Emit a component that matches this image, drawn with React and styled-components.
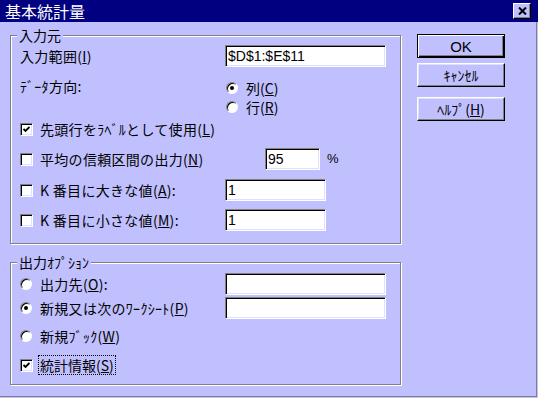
import styled, { createGlobalStyle, css } from "styled-components";

const GlobalStyle = createGlobalStyle`
  html, body {
    margin: 0;
    padding: 0;
    background: #c0c0ff;
  }
  body {
    font-family: "Noto Sans CJK JP", "Liberation Sans", sans-serif;
    font-size: 14px;
    color: #000;
  }
`;

const Window = styled.div`
  width: 538px;
  height: 398px;
  background: #c0c0ff;
  display: flex;
  flex-direction: column;
  overflow: hidden;
`;

const TitleBar = styled.div`
  height: 22px;
  flex-shrink: 0;
  background: #000080;
  color: #fff;
  display: flex;
  justify-content: space-between;
  align-items: center;
  padding: 0 7px 0 5px;
  font-size: 16px;
  line-height: 22px;
`;

const CloseButton = styled.div`
  width: 18px;
  height: 16px;
  box-sizing: border-box;
  background: #c0c0ff;
  border: 1px solid;
  border-color: #fff #000 #000 #fff;
  box-shadow: inset -1px -1px 0 #808080;
  display: flex;
  align-items: center;
  justify-content: center;
`;

const Body = styled.div`
  flex: 1;
  display: flex;
  padding-left: 10px;
  margin: 0 1px 1px 0;
  border-right: 1px solid #808080;
  border-bottom: 1px solid #808080;
`;

const LeftColumn = styled.div`
  display: flex;
  flex-direction: column;
`;

const RightColumn = styled.div`
  display: flex;
  flex-direction: column;
  margin-left: 16px;
  padding-top: 12px;
`;

const Group = styled.div`
  position: relative;
  box-sizing: border-box;
  width: 391px;
  height: ${(p) => p.$h}px;
  margin-top: ${(p) => p.$mt}px;
  border: 1px solid #808080;
  box-shadow: 1px 1px 0 #fff, inset 1px 1px 0 #fff;
  padding: 0 9px;
  display: flex;
  flex-direction: column;
`;

const Legend = styled.span`
  position: absolute;
  top: -9px;
  left: 6px;
  padding: 0 2px;
  background: #c0c0ff;
  line-height: 16px;
`;

const Row = styled.div`
  display: flex;
  align-items: ${(p) => (p.$top ? "flex-start" : "center")};
  height: ${(p) => p.$h || 22}px;
  margin-top: ${(p) => p.$mt}px;
  flex-shrink: 0;
  line-height: 18px;
  white-space: nowrap;
`;

const Label = styled.span`
  width: ${(p) => p.$w}px;
  flex-shrink: 0;
  letter-spacing: 0.3px;
`;

const Key = styled.span`
  text-decoration: underline;
`;

const Focus = styled.span`
  outline: 1px dotted #000;
  padding: 0 1px;
  margin-left: -1px;
`;

const CheckBox = styled.span`
  width: 13px;
  height: 13px;
  box-sizing: border-box;
  flex-shrink: 0;
  background: #fff;
  border: 1px solid;
  border-color: #808080 #fff #fff #808080;
  box-shadow: inset 1px 1px 0 #000, inset -1px -1px 0 #dfdfff;
  display: inline-flex;
  align-items: center;
  justify-content: center;
  margin-right: 7px;
`;

const Radio = styled.span`
  width: 12px;
  height: 12px;
  box-sizing: border-box;
  flex-shrink: 0;
  border-radius: 50%;
  background: #fff;
  border: 1px solid;
  border-color: #808080 #fff #fff #808080;
  box-shadow: inset 1px 1px 0 #000;
  display: inline-flex;
  align-items: center;
  justify-content: center;
  margin-right: 8px;
  &::after {
    content: "";
    width: 4px;
    height: 4px;
    border-radius: 50%;
    background: #000;
    display: ${(p) => (p.$on ? "block" : "none")};
  }
`;

const RadioColumn = styled.div`
  display: flex;
  flex-direction: column;
  padding-top: 1px;
`;

const RadioRow = styled.div`
  display: flex;
  align-items: center;
  height: 19px;
  line-height: 16px;
`;

const TextBox = styled.div`
  width: ${(p) => p.$w}px;
  height: 22px;
  box-sizing: border-box;
  flex-shrink: 0;
  background: #fff;
  border: 1px solid;
  border-color: #808080 #fff #fff #808080;
  box-shadow: inset 1px 1px 0 #000, inset -1px -1px 0 #dfdfff;
  padding: 0 2px;
  display: flex;
  align-items: center;
  font-family: "Liberation Sans", Arial, sans-serif;
  font-size: 14px;
`;

const Unit = styled.span`
  margin-left: 7px;
  font-family: "Liberation Sans", Arial, sans-serif;
  font-size: 13px;
`;

const Button = styled.button`
  width: 88px;
  height: 24px;
  margin: ${(p) => p.$mt || 0}px 0 0 0;
  padding: 0;
  box-sizing: border-box;
  background: #c0c0ff;
  color: #000;
  font-family: ${(p) =>
    p.$latin ? `"Liberation Sans", Arial, sans-serif` : `"Noto Sans CJK JP", sans-serif`};
  font-size: ${(p) => (p.$latin ? 15 : 14)}px;
  border: 1px solid;
  border-color: #fff #000 #000 #fff;
  box-shadow: inset -1px -1px 0 #808080, inset 1px 1px 0 #dfdfff;
  ${(p) =>
    p.$default &&
    css`
      border: 1px solid #000;
      box-shadow: inset 1px 1px 0 #fff, inset -1px -1px 0 #000, inset -2px -2px 0 #808080;
    `}
`;

const Check = () => (
  <svg width="7" height="7" viewBox="0 0 7 7">
    <polyline points="0.5,3 2.5,5 6.5,1" fill="none" stroke="#000" strokeWidth="1.8" />
  </svg>
);

const CloseX = () => (
  <svg width="9" height="8" viewBox="0 0 9 8">
    <path d="M1 0.5 L8 7.5 M8 0.5 L1 7.5" stroke="#000" strokeWidth="2" />
  </svg>
);

export default function App() {
  return (
    <>
      <GlobalStyle />
      <Window>
        <TitleBar>
          <span>基本統計量</span>
          <CloseButton>
            <CloseX />
          </CloseButton>
        </TitleBar>
        <Body>
          <LeftColumn>
            <Group $h={209} $mt={13}>
              <Legend>入力元</Legend>
              <Row $mt={9}>
                <Label $w={205}>
                  入力範囲(<Key>I</Key>)
                </Label>
                <TextBox $w={161}>$D$1:$E$11</TextBox>
              </Row>
              <Row $mt={10} $h={40} $top>
                <Label $w={206}>ﾃﾞｰﾀ方向:</Label>
                <RadioColumn>
                  <RadioRow>
                    <Radio $on />
                    列(<Key>C</Key>)
                  </RadioRow>
                  <RadioRow>
                    <Radio />
                    行(<Key>R</Key>)
                  </RadioRow>
                </RadioColumn>
              </Row>
              <Row $mt={3} $h={18}>
                <CheckBox>
                  <Check />
                </CheckBox>
                <Label>
                  先頭行をﾗﾍﾞﾙとして使用(<Key>L</Key>)
                </Label>
              </Row>
              <Row $mt={10}>
                <CheckBox />
                <Label $w={225}>
                  平均の信頼区間の出力(<Key>N</Key>)
                </Label>
                <TextBox $w={55}>95</TextBox>
                <Unit>%</Unit>
              </Row>
              <Row $mt={9}>
                <CheckBox />
                <Label $w={185}>
                  K 番目に大きな値(<Key>A</Key>):
                </Label>
                <TextBox $w={101}>1</TextBox>
              </Row>
              <Row $mt={8}>
                <CheckBox />
                <Label $w={185}>
                  K 番目に小さな値(<Key>M</Key>):
                </Label>
                <TextBox $w={101}>1</TextBox>
              </Row>
            </Group>

            <Group $h={123} $mt={18}>
              <Legend>出力ｵﾌﾟｼｮﾝ</Legend>
              <Row $mt={10}>
                <Radio />
                <Label $w={185}>
                  出力先(<Key>O</Key>):
                </Label>
                <TextBox $w={161} />
              </Row>
              <Row $mt={2}>
                <Radio $on />
                <Label $w={185}>
                  新規又は次のﾜｰｸｼｰﾄ(<Key>P</Key>)
                </Label>
                <TextBox $w={161} />
              </Row>
              <Row $mt={8} $h={18}>
                <Radio />
                <Label>
                  新規ﾌﾞｯｸ(<Key>W</Key>)
                </Label>
              </Row>
              <Row $mt={11} $h={18}>
                <CheckBox>
                  <Check />
                </CheckBox>
                <Focus>
                  統計情報(<Key>S</Key>)
                </Focus>
              </Row>
            </Group>
          </LeftColumn>

          <RightColumn>
            <Button $default $latin>
              OK
            </Button>
            <Button $mt={5}>ｷｬﾝｾﾙ</Button>
            <Button $mt={10}>
              ﾍﾙﾌﾟ(<Key>H</Key>)
            </Button>
          </RightColumn>
        </Body>
      </Window>
    </>
  );
}
